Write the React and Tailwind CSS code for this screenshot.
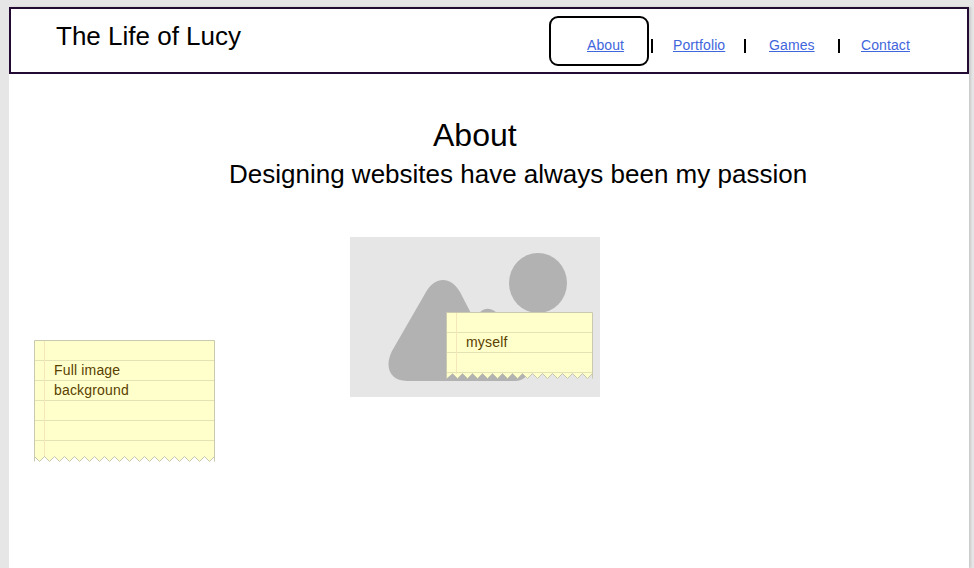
const NAV = [
  { label: "About", cell: "w-[100px] h-[50px] rounded-[9px] border-2 border-black pl-[36px] pt-[18px]" },
  { label: "Portfolio", cell: "w-[91px] pl-5 pt-5" },
  { label: "Games", cell: "w-[92px] pl-[23px] pt-5" },
  { label: "Contact", cell: "w-[90px] pl-[21px] pt-5" },
];

function Header() {
  return (
    <header className="flex h-[67px] justify-between border-2 border-[#230b33] bg-white">
      <h1 className="pl-[45px] pt-3 text-[26px] leading-[30px]">The Life of Lucy</h1>
      <nav className="flex pr-[37px] pt-[7px] text-sm leading-[18px] tracking-[0.1px] text-[#3f66dc]">
        {NAV.map((item, i) => (
          <div key={item.label} className="flex">
            {i > 0 && <span className={`mt-[23px] h-[14px] w-0.5 bg-black ${i === 1 ? "ml-0.5" : ""}`} />}
            <div className={item.cell}>
              <a href="#" className="underline">{item.label}</a>
            </div>
          </div>
        ))}
      </nav>
    </header>
  );
}

// Paper note with ruled lines and a torn bottom edge; `phase` is where the first notch peaks.
function StickyNote({ width, height, lines, phase, className, children }) {
  const top = height - 5.5;
  const bottom = height - 0.5;
  const teeth = [];
  for (let x = phase; x <= width - 1; x += 10) {
    teeth.push(`${x + 0.5},${top}`);
    if (x + 5 <= width - 1) teeth.push(`${x + 5.5},${bottom}`);
  }
  const torn = teeth.join(" ");
  return (
    <div className={`absolute ${className}`}>
      <svg width={width} height={height} className="absolute left-0 top-0">
        <polygon points={`0.5,0.5 0.5,${bottom} ${torn} ${width - 0.5},${top} ${width - 0.5},0.5`} fill="#ffffcc" />
        {lines.map((y) => (
          <path key={y} d={`M1 ${y + 0.5}H${width - 1}`} stroke="#e3e2b5" />
        ))}
        <path d={`M10.5 1V${height - 5}`} stroke="#f3e6b8" />
        <polyline points={torn} fill="none" stroke="#c6c6ac" />
        <path d={`M0.5 ${bottom}V0.5H${width - 0.5}V${bottom}`} fill="none" stroke="#c9c9b0" />
      </svg>
      <p className="relative pl-5 pt-5 text-sm leading-5 tracking-[0.17px] text-[#594100]">{children}</p>
    </div>
  );
}

function ImagePlaceholder() {
  return (
    <div className="relative h-[160px] w-[250px] bg-[#e6e6e6]">
      <svg width="250" height="160" viewBox="0 0 250 160" fill="#b2b2b2">
        <ellipse cx="188" cy="46" rx="29" ry="30" />
        <path d="M76 55 C85 39 101 39 110 55 L125 84 C130 68 144 68 151 82 L175 119 C183 133 177 144 165 144 H57 C40 144 34 130 42 114 Z" />
      </svg>
      <StickyNote width={147} height={67} lines={[20, 40, 60]} phase={6} className="left-[96px] top-[75px] h-[67px] w-[147px]">
        myself
      </StickyNote>
    </div>
  );
}

export default function App() {
  return (
    <div className="flex h-screen flex-col overflow-hidden bg-[#e6e6e6] pl-[9px] pr-[5px] pt-[7px] font-['Liberation_Sans',Arial,sans-serif] text-black">
      <div className="relative flex-1 bg-white shadow-[2px_0_2px_rgba(0,0,0,0.12)]">
        <Header />
        <main className="flex flex-col">
          <h2 className="pl-[424px] pt-[42px] text-[32px] leading-[38px]">About</h2>
          <p className="whitespace-nowrap pl-[220px] pt-[5px] text-[26px] leading-[30px]">
            Designing websites have always been my passion
          </p>
          <div className="pl-[341px] pt-12">
            <ImagePlaceholder />
          </div>
        </main>
        <StickyNote width={181} height={122} lines={[20, 40, 60, 80, 100]} phase={0} className="left-[25px] top-[333px] h-[122px] w-[181px]">
          Full image
          <br />
          background
        </StickyNote>
      </div>
    </div>
  );
}
